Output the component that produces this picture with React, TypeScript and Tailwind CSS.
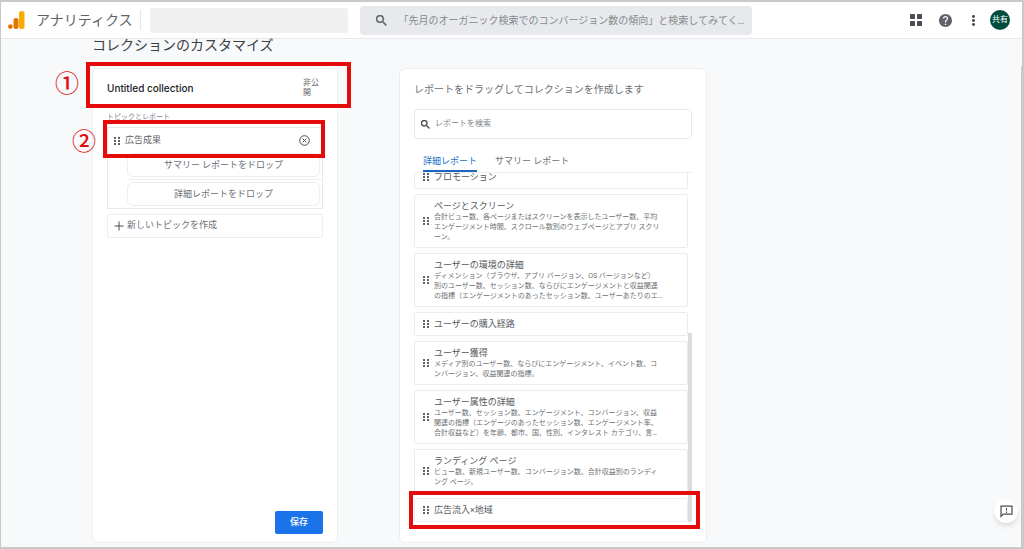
import React from 'react';

type Report = { title: string; lines?: string[]; marked?: boolean };

const reports: Report[] = [
  { title: 'プロモーション' },
  {
    title: 'ページとスクリーン',
    lines: [
      '合計ビュー数、各ページまたはスクリーンを表示したユーザー数、平均',
      'エンゲージメント時間、スクロール数別のウェブページとアプリ スクリ',
      'ーン。',
    ],
  },
  {
    title: 'ユーザーの環境の詳細',
    lines: [
      'ディメンション（ブラウザ、アプリ バージョン、OS バージョンなど）',
      '別のユーザー数、セッション数、ならびにエンゲージメントと収益関連',
      'の指標（エンゲージメントのあったセッション数、ユーザーあたりのエ…',
    ],
  },
  { title: 'ユーザーの購入経路' },
  {
    title: 'ユーザー獲得',
    lines: [
      'メディア別のユーザー数、ならびにエンゲージメント、イベント数、コ',
      'ンバージョン、収益関連の指標。',
    ],
  },
  {
    title: 'ユーザー属性の詳細',
    lines: [
      'ユーザー数、セッション数、エンゲージメント、コンバージョン、収益',
      '関連の指標（エンゲージのあったセッション数、エンゲージメント率、',
      '合計収益など）を年齢、都市、国、性別、インタレスト カテゴリ、言…',
    ],
  },
  {
    title: 'ランディング ページ',
    lines: [
      'ビュー数、新規ユーザー数、コンバージョン数、合計収益別のランディ',
      'ング ページ。',
    ],
  },
  { title: '広告流入×地域', marked: true },
];

function SearchIcon({ className }: { className: string }) {
  return (
    <svg viewBox="3 3 18 18" className={className} fill="currentColor" stroke="currentColor" strokeWidth="0.6" aria-hidden="true">
      <path d="M15.5 14h-.79l-.28-.27A6.47 6.47 0 0 0 16 9.5 6.5 6.5 0 1 0 9.5 16c1.61 0 3.09-.59 4.23-1.57l.27.28v.79l5 4.99L20.49 19l-4.99-5zm-6 0C7.01 14 5 11.99 5 9.5S7.01 5 9.5 5 14 7.01 14 9.5 11.99 14 9.5 14z" />
    </svg>
  );
}

function DragHandle() {
  return (
    <svg viewBox="0 0 6 8" className="h-2 w-1.5 shrink-0 text-[#5f6368]" fill="currentColor" aria-hidden="true">
      <rect x="0" y="0" width="2" height="2" />
      <rect x="4" y="0" width="2" height="2" />
      <rect x="0" y="3" width="2" height="2" />
      <rect x="4" y="3" width="2" height="2" />
      <rect x="0" y="6" width="2" height="2" />
      <rect x="4" y="6" width="2" height="2" />
    </svg>
  );
}

function Header() {
  return (
    <header className="flex h-[37px] shrink-0 items-center border-b border-[#e6e8ea] bg-white pr-3 pl-[7px]">
      <svg viewBox="0 0 17 18" className="h-[18px] w-[17px] shrink-0" aria-hidden="true">
        <rect x="11" y="0" width="5.5" height="18" rx="2.5" fill="#f9ab00" />
        <rect x="5.5" y="7" width="5" height="11" rx="2.3" fill="#e37400" />
        <circle cx="2.4" cy="15.6" r="2.3" fill="#e37400" />
      </svg>
      <span className="ml-[11px] shrink-0 text-sm text-[#5f6368]">アナリティクス</span>
      <div className="ml-2 h-5 w-px shrink-0 bg-[#e4e6e8]" />
      <div className="ml-[9px] h-[25px] w-[198px] shrink-0 rounded-xs bg-[#f0f0f0]" />
      <label className="ml-3 flex h-[29px] max-w-[392px] flex-1 items-center rounded bg-[#e8e9ec] pl-4 text-[#5f6368]">
        <SearchIcon className="size-[11px] shrink-0" />
        <input
          type="text"
          aria-label="検索"
          placeholder="「先月のオーガニック検索でのコンバージョン数の傾向」と検索してみてく…"
          className="ml-[11px] min-w-0 flex-1 bg-transparent text-[10px] outline-none placeholder:text-[#85898e]"
        />
      </label>
      <div className="ml-auto flex items-center">
        <button aria-label="アプリ" className="text-[#4a4d51]">
          <svg viewBox="0 0 12 12" className="size-3" fill="currentColor">
            <rect x="0" y="0" width="5" height="5" rx="0.6" />
            <rect x="7" y="0" width="5" height="5" rx="0.6" />
            <rect x="0" y="7" width="5" height="5" rx="0.6" />
            <rect x="7" y="7" width="5" height="5" rx="0.6" />
          </svg>
        </button>
        <button aria-label="ヘルプ" className="ml-[17px] text-[#5f6368]">
          <svg viewBox="2 2 20 20" className="size-[13px]" fill="currentColor">
            <path d="M12 2C6.48 2 2 6.48 2 12s4.48 10 10 10 10-4.48 10-10S17.52 2 12 2zm1 17h-2v-2h2v2zm2.07-7.75-.9.92C13.45 12.9 13 13.5 13 15h-2v-.5c0-1.1.45-2.1 1.17-2.83l1.24-1.26c.37-.36.59-.86.59-1.41 0-1.1-.9-2-2-2s-2 .9-2 2H8c0-2.21 1.79-4 4-4s4 1.79 4 4c0 .88-.36 1.68-.93 2.25z" />
          </svg>
        </button>
        <button aria-label="メニュー" className="ml-5 text-[#3c4043]">
          <svg viewBox="0 0 3 11" className="h-[11px] w-[3px]" fill="currentColor">
            <circle cx="1.5" cy="1.5" r="1.4" />
            <circle cx="1.5" cy="5.5" r="1.4" />
            <circle cx="1.5" cy="9.5" r="1.4" />
          </svg>
        </button>
        <button className="ml-[15px] flex size-5 items-center justify-center rounded-full bg-[#004d40] text-[8px] text-white">
          共有
        </button>
      </div>
    </header>
  );
}

function CollectionCard() {
  return (
    <section className="flex w-[246px] shrink-0 flex-col rounded-md border border-[#eceef0] bg-white px-3.5 pt-[7px] pb-2">
      <div className="relative flex h-6 items-center justify-between">
        <h2 className="font-['Inter','Noto_Sans_CJK_JP',sans-serif] text-[10px] font-medium text-[#202124]">
          Untitled collection
        </h2>
        <span className="mr-1 w-4 text-[8px] leading-[10px] text-[#5f6368]">非公開</span>
        <div className="pointer-events-none absolute -top-3.5 -right-7 -bottom-2 -left-[21px] border-4 border-[#e60b0b]" />
        <span className="absolute -top-1 -left-[52px] text-2xl leading-6 font-medium text-[#e00f0f]">①</span>
      </div>

      <h3 className="mt-3 text-[7px] leading-[10px] text-[#80868b]">トピックとレポート</h3>

      <div className="relative mt-[5px] border border-[#e6e8ea] pb-0.5">
        <div className="flex h-[25px] items-center pr-3 pl-1.5">
          <DragHandle />
          <span className="ml-[5px] text-[9px] text-[#5f6368]">広告成果</span>
          <button aria-label="削除" className="ml-auto text-[#4a4d51]">
            <svg viewBox="0 0 11 11" className="size-[11px]" fill="none" stroke="currentColor">
              <circle cx="5.5" cy="5.5" r="4.8" strokeWidth="1" />
              <path d="M3.7 3.7 7.3 7.3M7.3 3.7 3.7 7.3" strokeWidth="1" />
            </svg>
          </button>
        </div>
        <div className="ml-[19px] text-center text-[9px] text-[#6b7075]">
          <div className="mr-0.5 flex h-6 items-center justify-center rounded-md border border-[#eceef0] pt-0.5">
            サマリー レポートをドロップ
          </div>
          <div className="my-0.5 h-px bg-[#eceef0]" />
          <div className="mr-0.5 flex h-6 items-center justify-center rounded-md border border-[#eceef0] pt-0.5">
            詳細レポートをドロップ
          </div>
        </div>
        <div className="pointer-events-none absolute -top-2 -right-[3px] -left-[5px] h-[38px] border-4 border-[#e60b0b]" />
        <span className="absolute top-0.5 -left-9 text-2xl leading-6 font-medium text-[#e00f0f]">②</span>
      </div>

      <button className="mt-[5px] flex h-6 items-center rounded-xs border border-[#eceef0] pl-1.5 text-[9px] text-[#6b7075]">
        <svg viewBox="0 0 10 10" className="size-2.5" fill="none" stroke="#4a4d51" aria-hidden="true">
          <path d="M5 0.5v9M0.5 5h9" />
        </svg>
        <span className="ml-[3px]">新しいトピックを作成</span>
      </button>

      <button className="mt-auto h-[23px] w-12 self-end rounded-xs bg-[#1a73e8] text-[9px] font-medium text-white">
        保存
      </button>
    </section>
  );
}

function ReportItem({ report }: { report: Report }) {
  return (
    <li className="relative flex items-center rounded-xs border border-[#eaecee] py-[5px] pl-2">
      <DragHandle />
      <div className="ml-[5px] whitespace-nowrap">
        <h3 className="text-[9px] leading-3 text-[#55595e]">{report.title}</h3>
        {report.lines && (
          <p className="text-[7px] leading-[10px] text-[#6b7075]">
            {report.lines.map((line) => (
              <span key={line} className="block">{line}</span>
            ))}
          </p>
        )}
      </div>
      {report.marked && (
        <div className="pointer-events-none absolute -top-2 -right-[13px] -bottom-2 -left-1.5 z-10 border-4 border-[#e60b0b]" />
      )}
    </li>
  );
}

function ReportsCard() {
  return (
    <section className="w-[308px] shrink-0 rounded-md border border-[#eceef0] bg-white px-3.5 pt-3.5">
      <h2 className="text-[10px] leading-[14px] text-[#6b7075]">レポートをドラッグしてコレクションを作成します</h2>
      <label className="mt-3 flex h-[30px] items-center rounded border border-[#e6e8ea] pl-1.5 text-[#3c4043]">
        <SearchIcon className="size-[9px] shrink-0" />
        <input
          type="text"
          aria-label="レポートを検索"
          placeholder="レポートを検索"
          className="ml-[5px] min-w-0 flex-1 bg-transparent text-[8px] outline-none placeholder:text-[#80868b]"
        />
      </label>
      <div role="tablist" className="mt-[15px] flex h-[18px] gap-[18px] pl-[9px] text-[9px] leading-[14px]">
        <button role="tab" aria-selected="true" className="flex items-start border-b-2 border-[#1967c0] text-[#1a73c8]">
          詳細レポート
        </button>
        <button role="tab" aria-selected="false" className="flex items-start text-[#6b7075]">サマリー レポート</button>
      </div>
      <div className="flex border-t border-[#eceef0]">
        <ul className="-mt-2 flex min-w-0 flex-1 flex-col gap-[5px] [clip-path:inset(8px_-20px_-20px_-20px)]">
          {reports.map((report) => (
            <ReportItem key={report.title} report={report} />
          ))}
        </ul>
        <div className="mt-40 w-1 bg-[#dadcde]" />
      </div>
    </section>
  );
}

export default function App() {
  return (
    <div
      lang="ja"
      className="relative flex min-h-screen flex-col overflow-hidden border-t-2 border-r-2 border-b-2 border-l border-[#c9c9c9] bg-[#f7f9fb] font-['Roboto','Noto_Sans_CJK_JP',sans-serif]"
    >
      <Header />
      <main className="flex flex-1 flex-col pb-1 pl-[91px]">
        <h1 className="text-sm leading-3 text-[#3c4043]">コレクションのカスタマイズ</h1>
        <div className="mt-[17px] flex flex-1 gap-[61px]">
          <CollectionCard />
          <ReportsCard />
        </div>
      </main>
      <div className="absolute top-16 right-0 bottom-0 w-px bg-[#c9c9c9]" />
      <button
        aria-label="フィードバックを送信"
        className="absolute right-1 bottom-6 flex size-6 items-center justify-center rounded-full bg-white text-[#4a4d51] shadow-md"
      >
        <svg viewBox="0 0 13 13" className="size-[13px]" fill="none" stroke="currentColor">
          <path d="M1 11.5V1.2h11v8H3.2z" strokeWidth="1.2" />
          <path d="M6.5 3v2.6M6.5 6.6v1.3" strokeWidth="1.1" />
        </svg>
      </button>
    </div>
  );
}
